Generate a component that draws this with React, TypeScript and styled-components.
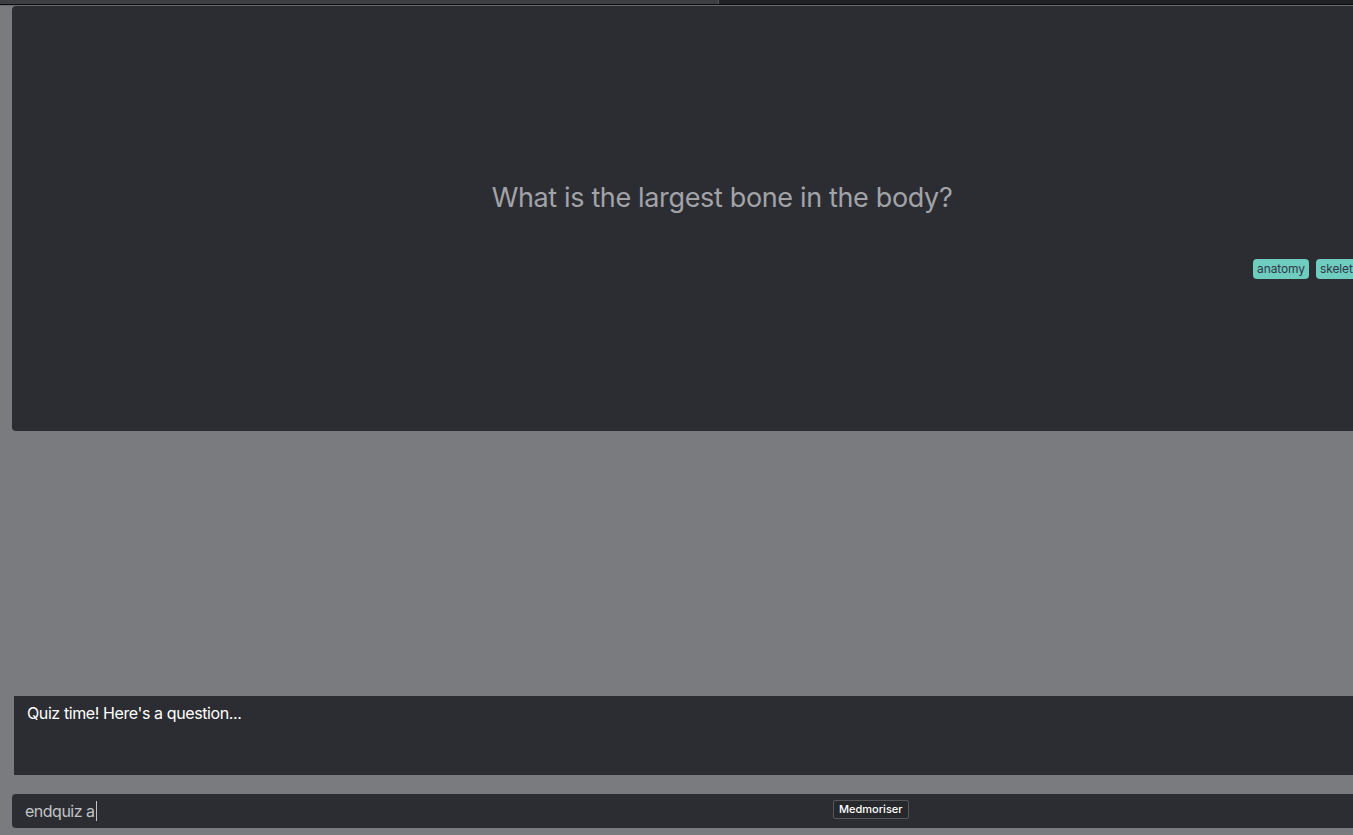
import React from "react";
import styled, { createGlobalStyle } from "styled-components";

const Global = createGlobalStyle`
  html, body {
    margin: 0;
    padding: 0;
    background: #7a7b7f;
    overflow: hidden;
    font-family: Inter, "Noto Sans", "Liberation Sans", sans-serif;
  }
`;

const Page = styled.div`
  width: 1353px;
  height: 835px;
  display: flex;
  flex-direction: column;
  overflow: hidden;
  background: #7a7b7f;
`;

const TopStrip = styled.div`
  display: flex;
  height: 4px;
  flex-shrink: 0;
`;

const TopSegment = styled.div<{ $w?: number; $bg: string }>`
  background: ${(p) => p.$bg};
  ${(p) => (p.$w ? `width: ${p.$w}px;` : "flex: 1;")}
`;

const Rule = styled.div<{ $bg: string }>`
  height: 1px;
  flex-shrink: 0;
  background: ${(p) => p.$bg};
`;

const Card = styled.section`
  margin: 0 0 0 12px;
  width: 1420px;
  height: 425px;
  flex-shrink: 0;
  background: #2c2d32;
  border-radius: 4px 0 4px 4px;
  padding-top: 172px;
  box-sizing: border-box;
  display: flex;
  flex-direction: column;
`;

const Question = styled.h1`
  margin: 0;
  font-size: 27px;
  line-height: 40px;
  font-weight: 400;
  color: #a2a3a8;
  text-align: center;
  letter-spacing: -0.35px;
`;

const Tags = styled.div`
  display: flex;
  gap: 7px;
  margin: 41px 0 0 1241px;
`;

const Tag = styled.span`
  background: #6fcdc0;
  color: #2f3848;
  font-size: 12px;
  line-height: 20px;
  height: 20px;
  padding: 0 4px;
  border-radius: 4px;
  letter-spacing: -0.1px;
  white-space: nowrap;
`;

const Spacer = styled.div`
  flex: 1;
`;

const Message = styled.div`
  margin-left: 14px;
  width: 1420px;
  height: 79px;
  flex-shrink: 0;
  background: #2c2d32;
  color: #ffffff;
  font-size: 16px;
  line-height: 20px;
  letter-spacing: -0.4px;
  padding: 7px 13px;
  box-sizing: border-box;
`;

const InputBar = styled.div`
  margin: 19px 0 7px 12px;
  width: 1420px;
  height: 34px;
  flex-shrink: 0;
  background: #2c2d32;
  border-radius: 4px 0 0 4px;
  display: flex;
  align-items: center;
  padding-left: 13px;
  box-sizing: border-box;
  position: relative;
`;

const InputText = styled.span`
  color: #c2c3c7;
  font-size: 16px;
  line-height: 20px;
  letter-spacing: -0.5px;
  display: flex;
  align-items: center;
`;

const Caret = styled.span`
  display: inline-block;
  width: 1px;
  height: 20px;
  background: #c2c3c7;
  margin-left: 1px;
`;

const AppButton = styled.button`
  position: absolute;
  left: 821px;
  top: 6px;
  height: 19px;
  padding: 0 5px;
  background: #27282b;
  border: 1px solid #56575b;
  border-radius: 2px;
  color: #ffffff;
  font-family: Inter, "Liberation Sans", sans-serif;
  font-size: 11px;
  font-weight: 500;
  line-height: 17px;
`;

export default function App() {
  return (
    <Page>
      <Global />
      <TopStrip>
        <TopSegment $w={718} $bg="#3d3e42" />
        <TopSegment $w={1} $bg="#55565a" />
        <TopSegment $bg="#1f2023" />
      </TopStrip>
      <Rule $bg="#0c0c0d" />
      <Rule $bg="#6a6b6f" />
      <Card>
        <Question>What is the largest bone in the body?</Question>
        <Tags>
          <Tag>anatomy</Tag>
          <Tag>skeletal</Tag>
        </Tags>
      </Card>
      <Spacer />
      <Message>Quiz time! Here's a question...</Message>
      <InputBar>
        <InputText>
          endquiz a<Caret />
        </InputText>
        <AppButton>Medmoriser</AppButton>
      </InputBar>
    </Page>
  );
}
